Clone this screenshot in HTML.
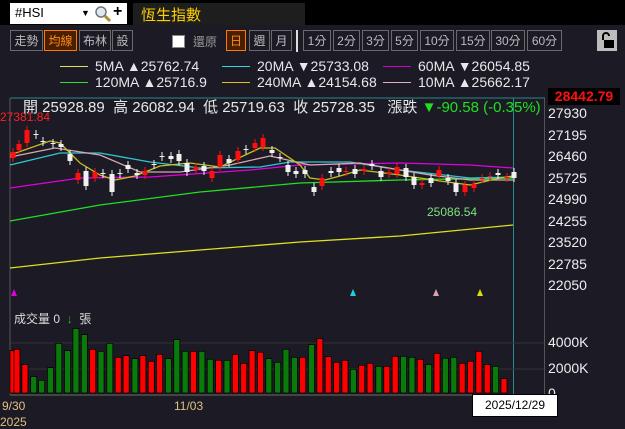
<!DOCTYPE html>
<html><head><meta charset="utf-8"><style>
body{margin:0;width:625px;height:426px;background:#1b1a25;overflow:hidden;font-family:"Liberation Sans","Noto Sans CJK TC",sans-serif;position:relative}
.a{position:absolute;white-space:nowrap}
.btn{position:absolute;top:30px;height:21px;border:1px solid #6a6a6a;color:#bdbdbd;font-size:12px;line-height:20px;text-align:center;box-sizing:border-box}
.on{border-color:#ff7a00;background:#4a1f00;color:#ff8a1a}
.lg{position:absolute;color:#e8e8e8;font-size:14px}
</style></head><body>
<div class="a" style="left:0;top:0;width:625px;height:25px;background:#000"></div>
<div class="a" style="left:10px;top:3px;width:117px;height:21px;background:#fff"></div>
<div class="a" style="left:15px;top:5px;font-size:13px;color:#000">#HSI</div>
<div class="a" style="left:81px;top:8px;font-size:9px;color:#000">▼</div>
<svg class="a" style="left:94px;top:5px" width="18" height="18"><circle cx="7" cy="7" r="5" fill="#dfe9f3" stroke="#777" stroke-width="1.5"/><line x1="11" y1="11" x2="16" y2="16" stroke="#b08a30" stroke-width="3"/></svg>
<div class="a" style="left:113px;top:3px;font-size:16px;font-weight:bold;color:#000">+</div>
<div class="a" style="left:133px;top:3px;width:172px;height:22px;background:#1e1e1e"></div>
<div class="a" style="left:141px;top:4px;font-size:15px;color:#ffd000">恆生指數</div>

<div class="btn" style="left:10px;width:33px">走勢</div>
<div class="btn on" style="left:44px;width:33px">均線</div>
<div class="btn" style="left:79px;width:32px">布林</div>
<div class="btn" style="left:112px;width:21px">設</div>
<div class="a" style="left:172px;top:35px;width:11px;height:11px;background:#fff;border:1px solid #888"></div>
<div class="a" style="left:193px;top:33px;font-size:12px;color:#999">還原</div>
<div class="btn on" style="left:226px;width:20px">日</div>
<div class="btn" style="left:249px;width:21px">週</div>
<div class="btn" style="left:271px;width:21px">月</div>
<div class="a" style="left:296px;top:30px;width:2px;height:22px;background:#ddd"></div>
<div class="btn" style="left:303px;width:28px">1分</div>
<div class="btn" style="left:333px;width:27px">2分</div>
<div class="btn" style="left:362px;width:27px">3分</div>
<div class="btn" style="left:391px;width:27px">5分</div>
<div class="btn" style="left:420px;width:34px">10分</div>
<div class="btn" style="left:456px;width:34px">15分</div>
<div class="btn" style="left:491px;width:34px">30分</div>
<div class="btn" style="left:527px;width:35px">60分</div>
<div class="a" style="left:597px;top:30px;width:20px;height:21px;background:#bdbdbd"></div>
<svg class="a" style="left:600px;top:32px" width="15" height="17"><path d="M3 8V4a3 3 0 0 1 6 0" fill="none" stroke="#000" stroke-width="2"/><rect x="4" y="8" width="10" height="8" fill="#000"/></svg>

<div class="a" style="left:60px;top:66px;width:28px;height:1px;background:#e0e060"></div>
<div class="lg" style="left:95px;top:58px">5MA ▲25762.74</div>
<div class="a" style="left:222px;top:66px;width:28px;height:1px;background:#30d8e0"></div>
<div class="lg" style="left:257px;top:58px">20MA ▼25733.08</div>
<div class="a" style="left:383px;top:66px;width:28px;height:1px;background:#d000d0"></div>
<div class="lg" style="left:418px;top:58px">60MA ▼26054.85</div>
<div class="a" style="left:60px;top:82px;width:28px;height:1px;background:#30e030"></div>
<div class="lg" style="left:95px;top:74px">120MA ▲25716.9</div>
<div class="a" style="left:222px;top:82px;width:28px;height:1px;background:#e0c020"></div>
<div class="lg" style="left:257px;top:74px">240MA ▲24154.68</div>
<div class="a" style="left:383px;top:82px;width:28px;height:1px;background:#e0b0c0"></div>
<div class="lg" style="left:418px;top:74px">10MA ▲25662.17</div>

<svg class="a" style="left:0;top:0" width="625" height="426">
<line x1="10" y1="98" x2="545" y2="98" stroke="#2a8a8a"/>
<line x1="10" y1="98" x2="10" y2="395" stroke="#555"/>
<line x1="544.5" y1="98" x2="544.5" y2="400" stroke="#555"/>
<line x1="513.5" y1="98" x2="513.5" y2="400" stroke="#2a8a8a"/>
<line x1="10" y1="343" x2="544" y2="343" stroke="#333"/>
<line x1="10" y1="369" x2="544" y2="369" stroke="#333"/>
<line x1="10" y1="395" x2="544" y2="395" stroke="#444" stroke-width="2"/>
<polyline fill="none" stroke="#e0e020" stroke-width="1.3" points="10,268 100,258 200,250 300,242 400,236 513,225"/>
<polyline fill="none" stroke="#20e020" stroke-width="1.3" points="10,221 100,205 200,192 300,183 400,180 513,178"/>
<polyline fill="none" stroke="#e000e0" stroke-width="1.3" points="10,188 80,178 150,177 250,170 300,165 400,163 470,165 513,168"/>
<polyline fill="none" stroke="#30c8d0" stroke-width="1.3" points="10,165 60,153 100,153 150,162 200,168 260,167 290,162 350,162 400,170 470,178 513,177"/>
<polyline fill="none" stroke="#d8a8b0" stroke-width="1.3" points="10,157 55,148 100,155 140,172 180,172 230,165 270,156 310,165 360,163 400,170 430,175 470,180 513,180"/>
<polyline fill="none" stroke="#c8c020" stroke-width="1.3" points="10,155 50,141 60,143 80,163 100,175 115,180 135,176 160,166 190,163 220,167 260,148 275,148 300,165 310,178 325,180 340,176 360,170 400,175 440,181 470,185 500,178 513,176"/>
<g id="c"></g>
<g id="v"></g>
<polygon points="11,296 17,296 14,289" fill="#e000e0"/>
<polygon points="350,296 356,296 353,289" fill="#20d0e0"/>
<polygon points="433,296 439,296 436,289" fill="#e0a0b0"/>
<polygon points="477,296 483,296 480,289" fill="#e0e000"/>
</svg>
<div class="a" style="left:0;top:110px;font-size:12px;color:#ff2020">27381.84</div>
<div class="a" style="left:23px;top:96px;font-size:15px;color:#e8e8e8">開 25928.89&nbsp; 高 26082.94&nbsp; 低 25719.63&nbsp; 收 25728.35&nbsp;&nbsp; 漲跌 <span style="color:#20e020">▼-90.58 (-0.35%)</span></div>
<div class="a" style="left:548px;top:88px;width:72px;height:17px;background:#000;color:#ff1010;font-size:14px;font-weight:bold;line-height:17px;text-align:center">28442.79</div>
<div class="a" style="left:548px;top:103px;font-size:14px;color:#eee;line-height:21.5px">27930<br>27195<br>26460<br>25725<br>24990<br>24255<br>23520<br>22785<br>22050</div>
<div class="a" style="left:427px;top:205px;font-size:12px;color:#80e080">25086.54</div>
<div class="a" style="left:14px;top:310px;font-size:12px;color:#ddd">成交量 0 &nbsp;<span style="color:#20c020">↓</span>&nbsp; 張</div>
<div class="a" style="left:548px;top:334px;font-size:14px;color:#eee">4000K</div>
<div class="a" style="left:548px;top:360px;font-size:14px;color:#eee">2000K</div>
<div class="a" style="left:548px;top:385px;font-size:14px;color:#eee">0</div>
<div class="a" style="left:2px;top:399px;font-size:12px;color:#e0c080">9/30</div>
<div class="a" style="left:174px;top:399px;font-size:12px;color:#e0c080">11/03</div>
<div class="a" style="left:0px;top:415px;font-size:12px;color:#e0c080">2025</div>
<div class="a" style="left:472px;top:394px;width:84px;height:21px;background:#fff;border:1px solid #000;color:#000;font-size:12px;line-height:21px;text-align:center">2025/12/29</div>
<script>
var C=[[11,'r',152,158],[17,'r',144,150],[25,'r',130,143],[34,'w',134,135],[41,'w',141,142],[51,'w',143,144],[59,'w',144,147],[68,'w',154,161],[76,'r',173,180],[84,'w',171,186],[93,'r',172,178],[101,'w',173,174],[110,'w',174,192],[118,'w',173,174],[126,'w',165,169],[135,'w',173,175],[143,'r',171,175],[152,'w',164,165],[160,'w',156,157],[169,'w',156,159],[177,'w',154,161],[185,'w',163,172],[194,'r',167,170],[202,'w',166,171],[210,'r',171,178],[218,'r',155,167],[227,'w',159,163],[236,'r',151,160],[244,'w',149,150],[253,'r',143,148],[261,'r',138,147],[270,'w',150,153],[278,'w',157,158],[286,'w',165,172],[294,'w',171,174],[303,'w',170,174],[312,'w',187,192],[320,'r',178,186],[329,'w',171,173],[337,'w',168,172],[344,'r',171,172],[353,'w',169,174],[362,'r',169,171],[370,'w',164,166],[379,'w',171,177],[387,'r',172,174],[395,'r',167,174],[404,'w',168,177],[412,'w',177,185],[420,'r',183,185],[429,'w',178,183],[437,'r',170,176],[446,'w',178,181],[454,'w',183,192],[463,'r',185,192],[472,'r',184,188],[480,'r',178,179],[488,'r',176,177],[496,'w',173,175],[505,'r',177,178],[512,'w',172,178]];
var s='';C.forEach(function(c){var f=c[1]=='r'?'#ff1010':'#f0f0f0';s+='<line x1="'+(c[0]+2)+'" y1="'+(c[2]-4)+'" x2="'+(c[0]+2)+'" y2="'+(c[3]+4)+'" stroke="'+f+'"/><rect x="'+(c[0]-0.5)+'" y="'+c[2]+'" width="5" height="'+Math.max(1,c[3]-c[2])+'" fill="'+f+'"/>';});
document.getElementById('c').innerHTML=s;
var V=[[25,'r',212],[35,'r',208],[55,'r',254],[77,'g',290],[97,'g',301],[119,'g',263],[140,'g',190],[162,'g',212],[183,'g',146],[204,'g',164],[225,'r',208],[246,'g',214],[268,'g',190],[289,'r',232],[309,'r',227],[331,'g',236],[351,'r',227],[372,'r',244],[393,'r',223],[415,'g',236],[436,'g',179],[457,'g',214],[478,'r',214],[499,'g',214],[520,'g',238],[541,'r',241],[562,'g',241],[583,'r',223],[604,'r',250],[625,'r',212],[646,'r',217],[667,'g',236],[689,'g',247],[710,'g',208],[731,'g',232],[752,'r',232],[774,'g',194],[795,'r',176],[816,'r',230],[837,'r',247],[858,'r',241],[879,'g',268],[900,'r',256],[921,'r',250],[943,'g',259],[963,'r',259],[984,'r',229],[1005,'g',229],[1026,'g',232],[1047,'r',238],[1068,'g',254],[1089,'r',220],[1110,'g',235],[1131,'g',232],[1152,'r',250],[1173,'r',244],[1194,'r',214],[1215,'r',254],[1236,'g',259],[1257,'r',296]];
s='';V.forEach(function(v){var x=v[0]/2.509,y=v[2]/3+280;s+='<rect x="'+x+'" y="'+y+'" width="6" height="'+(393-y)+'" fill="'+(v[1]=='r'?'#ff0000':'#0a7a0a')+'" stroke="#000" stroke-width="0.7"/>';});
document.getElementById('v').innerHTML=s;
</script>
</body></html>
